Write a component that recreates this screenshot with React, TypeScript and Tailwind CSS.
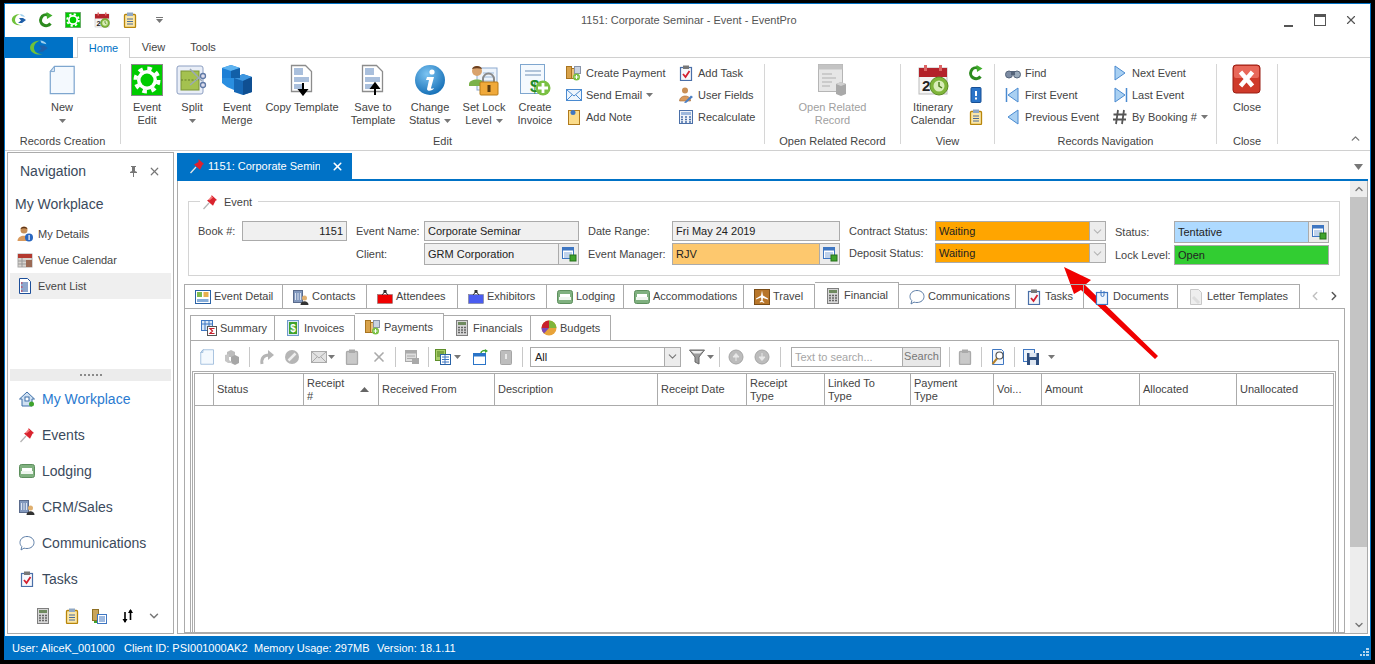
import React from 'react';
import { ChevronDown, ChevronUp, ChevronLeft, ChevronRight, X } from 'lucide-react';

const Svg = ({ s = 16, children }: { s?: number; children: React.ReactNode }) => (
  <svg width={s} height={s} viewBox={`0 0 ${s} ${s}`} className="shrink-0">
    {children}
  </svg>
);

const Caret = () => (
  <svg width="7" height="4" viewBox="0 0 7 4" className="shrink-0">
    <path d="M0 0h7L3.5 4z" fill="#777" />
  </svg>
);

const Logo = ({ s = 16 }: { s?: number }) => (
  <svg width={s} height={s} viewBox="0 0 16 16" className="shrink-0">
    <path d="M9 2C4 2 0 5 1 9c1 3 5 5 10 4-4 0-7-2-7-5 0-3 2-5 5-6z" fill="#6fc13a" />
    <path d="M8 6h4l3 2-4 3H7l3-2.500z" fill="#1f5fa8" />
    <path d="M9 2c2 0 4 1 5 3l-4-1z" fill="#9fd0ee" />
  </svg>
);

const Refresh = ({ s = 16 }: { s?: number }) => (
  <svg width={s} height={s} viewBox="0 0 16 16" className="shrink-0">
    <path d="M12.500 11.500A5.500 5.500 0 1 1 10 3" fill="none" stroke="#2c8a1e" strokeWidth="3" />
    <path d="M8.500 0l6 3.500-5.500 3.500z" fill="#3fae2a" />
  </svg>
);

const GearBox = ({ s = 16 }: { s?: number }) => (
  <svg width={s} height={s} viewBox="0 0 32 32" className="shrink-0">
    <rect x="0.500" y="0.500" width="31" height="31" fill="#00cc00" stroke="#8a8a8a" />
    <circle cx="16" cy="16" r="11.500" fill="none" stroke="#fff" strokeWidth="4" strokeDasharray="4.500 4.530" />
    <circle cx="16" cy="16" r="10" fill="#fff" />
    <circle cx="16" cy="16" r="6.500" fill="#00cc00" />
  </svg>
);

const CalClock = ({ s = 16 }: { s?: number }) => (
  <svg width={s} height={s} viewBox="0 0 32 32" className="shrink-0">
    <rect x="2" y="4" width="28" height="26" fill="#f4f4f4" stroke="#bbb" />
    <rect x="2" y="4" width="28" height="9" fill="#b3222a" />
    <rect x="7" y="1" width="3" height="6" fill="#d66" />
    <rect x="22" y="1" width="3" height="6" fill="#d66" />
    <text x="5" y="27" fontSize="15" fontWeight="700" fill="#222" fontFamily="Liberation Sans, sans-serif">2</text>
    <circle cx="22" cy="22" r="9" fill="#7fb53a" stroke="#5b8c22" />
    <circle cx="22" cy="22" r="5.500" fill="#d9edb8" />
    <path d="M22 18v4l3 2" stroke="#4f7f1c" strokeWidth="1.500" fill="none" />
  </svg>
);

const Clip = ({ gray = false }: { gray?: boolean }) => (
  <Svg>
    <rect x="2.500" y="2.500" width="11" height="13" rx="1" fill={gray ? '#c9c9c9' : '#fbe7a8'} stroke={gray ? '#aaa' : '#b8860b'} strokeWidth="1.300" />
    <rect x="5" y="0.500" width="6" height="3.500" fill={gray ? '#aaa' : '#8fa7c4'} />
    {!gray && <path d="M5 7h6M5 9.500h6M5 12h6" stroke="#4a6b9a" />}
  </Svg>
);

const Pin = ({ s = 16 }: { s?: number }) => (
  <svg width={s} height={s} viewBox="0 0 16 16" className="shrink-0">
    <path d="M1.500 15L7 9" stroke="#b5b5b5" strokeWidth="1.300" />
    <path d="M9.500 1l5.500 5-1.500.7-2.500 5L5 6.500l4.500-2.500z" fill="#d9232e" />
    <path d="M9.500 2l1.500 1.500-3.500 3-1-1z" fill="#f47a7a" />
  </svg>
);

const PinWhite = () => (
  <Svg>
    <path d="M1.500 15L7 9" stroke="#e5e5e5" strokeWidth="1.300" />
    <path d="M9.500 1l5.500 5-1.500.7-2.500 5L5 6.500l4.500-2.500z" fill="#e0202c" />
  </Svg>
);

const DocNew = ({ s = 16 }: { s?: number }) => (
  <svg width={s} height={s} viewBox="0 0 32 32" className="shrink-0">
    <path d="M8 1.500h21v29H3.500V7z" fill="#f4f9fe" stroke="#7ea6cf" strokeWidth="1.300" />
    <path d="M8 1.500V7H3.500z" fill="#d5e5f5" stroke="#7ea6cf" />
  </svg>
);

const Split = () => (
  <Svg s={32}>
    <rect x="1" y="2" width="26" height="28" rx="2" fill="#e9eef7" stroke="#8d9fc2" />
    <rect x="5" y="7" width="18" height="19" fill="#a4c14f" stroke="#7a9436" />
    <path d="M5 16h18" stroke="#667f28" strokeDasharray="2 1.500" />
    <path d="M14 5l12 12M14 21l11-9" stroke="#9aa7b8" strokeWidth="1.500" />
    <circle cx="27" cy="12" r="2.500" fill="#dde" stroke="#5f79a5" strokeWidth="1.300" />
    <circle cx="27" cy="21" r="2.500" fill="#dde" stroke="#5f79a5" strokeWidth="1.300" />
  </Svg>
);

const Merge = () => (
  <Svg s={32}>
    <path d="M1 4l9-3 9 3v10H1z" fill="#1d7fd6" />
    <path d="M1 4l9-3 9 3-9 3z" fill="#5db3f0" />
    <path d="M13 14l9-4 9 3v15l-9 3-9-3z" fill="#1667b5" />
    <path d="M13 14l9-4 9 3-9 4z" fill="#3d96e0" />
    <path d="M22 17l9-4v15l-9 3z" fill="#0f4f92" />
    <path d="M1 14h12v12l-7-3-5-4z" fill="#2a8ee0" />
    <path d="M10 7l9-3v10h-9z" fill="#125fa8" />
  </Svg>
);

const Template = ({ up = false }: { up?: boolean }) => (
  <Svg s={32}>
    <path d="M5.500 1.500h14l6 6v20h-20z" fill="#fff" stroke="#8c8c8c" strokeWidth="1.300" />
    <rect x="8" y="4" width="9" height="7" fill="#a9bfdc" />
    <rect x="8" y="13" width="15" height="5" fill="#a9bfdc" />
    <rect x="8" y="20" width="8" height="5" fill="#a9bfdc" />
    <path d={up ? 'M18 31V21M14.500 24l3.500-4.500 3.500 4.500z' : 'M17 19v10M13.500 26l3.500 4.500 3.500-4.500z'} stroke="#000" strokeWidth="2" fill="#000" />
  </Svg>
);

const Info = () => (
  <Svg s={32}>
    <defs>
      <radialGradient id="ig" cx="0.400" cy="0.300" r="0.800">
        <stop offset="0" stopColor="#7cc4f2" />
        <stop offset="1" stopColor="#0a66b0" />
      </radialGradient>
    </defs>
    <circle cx="16" cy="16" r="15" fill="url(#ig)" />
    <circle cx="18" cy="8" r="2.600" fill="#fff" />
    <path d="M13 13h7l-3 11c0 1 1 1 3 0-1 3-7 4-7 1l2-9h-3z" fill="#fff" />
  </Svg>
);

const LockUser = () => (
  <Svg s={32}>
    <rect x="9" y="4" width="20" height="22" fill="#eef4fb" stroke="#8ba9cf" />
    <path d="M15 9h11M15 13h11M15 17h11" stroke="#9cb8d8" />
    <circle cx="9" cy="7" r="5" fill="#d9a26c" />
    <path d="M4 5c1-4 9-4 10 0-3-1-7-1-10 0z" fill="#6b4020" />
    <path d="M1 20c0-6 16-6 16 0v2H1z" fill="#7bb24a" />
    <path d="M15 19v-4a5.500 5.500 0 0 1 11 0v4" fill="none" stroke="#8a8a8a" strokeWidth="2" />
    <rect x="12" y="18" width="18" height="13" rx="1" fill="#f0a93a" stroke="#b97a16" />
    <rect x="19.500" y="21" width="3" height="7" fill="#5b3b0e" />
  </Svg>
);

const Invoice = () => (
  <Svg s={32}>
    <rect x="1.500" y="0.500" width="24" height="29" fill="#f4f9fe" stroke="#7ea6cf" />
    <path d="M6 7h16M6 11h16" stroke="#6f8fb5" />
    <text x="11" y="28" fontSize="17" fontWeight="700" fill="#1f8a2a" fontFamily="Liberation Sans, sans-serif">$</text>
    <circle cx="24" cy="24" r="7.500" fill="#7ac043" />
    <path d="M24 19v10M19 24h10" stroke="#fff" strokeWidth="2.800" />
  </Svg>
);

const OpenRelated = () => (
  <Svg s={32}>
    <rect x="1.500" y="0.500" width="24" height="27" fill="#e6e6e6" stroke="#b5b5b5" />
    <rect x="1.500" y="0.500" width="24" height="5" fill="#c3c3c3" />
    <path d="M5 10h10M5 14h14M5 18h10M5 22h8" stroke="#b0b0b0" />
    <path d="M19 20l5-2 5 2v10l-5 2-5-2z" fill="#a9a9a9" />
    <path d="M19 20l5 2 5-2-5-2z" fill="#cfcfcf" />
  </Svg>
);

const CloseBig = () => (
  <Svg s={32}>
    <rect x="2" y="1" width="27" height="28" rx="3" fill="#cf3a2a" stroke="#9a1f14" />
    <rect x="3" y="2" width="25" height="12" rx="2" fill="#e8685a" />
    <path d="M9.500 8l12 14M21.500 8l-12 14" stroke="#fff" strokeWidth="4.500" />
  </Svg>
);

const Coins = () => (
  <Svg>
    <rect x="0.500" y="1.500" width="5" height="12" fill="#d8a24a" stroke="#a87420" />
    <rect x="5.500" y="3.500" width="4" height="10" fill="#eac27c" stroke="#a87420" />
    <rect x="8.500" y="1.500" width="6" height="7" fill="#c9d3e2" stroke="#8894a8" />
    <circle cx="10.500" cy="12" r="3.500" fill="#7ac043" />
    <path d="M10.500 10v4M8.500 12h4" stroke="#fff" />
  </Svg>
);

const Mail = ({ gray = false }: { gray?: boolean }) => (
  <Svg>
    <rect x="0.500" y="2.500" width="15" height="11" fill={gray ? '#e2e2e2' : '#eef5fc'} stroke={gray ? '#aaa' : '#4a8ad0'} />
    <path d="M1 3l7 6 7-6M1 13l5-5M15 13l-5-5" fill="none" stroke={gray ? '#aaa' : '#4a8ad0'} />
  </Svg>
);

const Note = () => (
  <Svg>
    <rect x="2.500" y="1.500" width="11" height="14" fill="#fbdc8a" stroke="#b07a1c" />
    <circle cx="7" cy="3.500" r="2.500" fill="#3f77c2" />
  </Svg>
);

const TaskClip = () => (
  <Svg>
    <rect x="2.500" y="2.500" width="11" height="13" fill="#f6f8fc" stroke="#4a6fa8" strokeWidth="1.200" />
    <rect x="5" y="0.500" width="6" height="3.500" fill="#777" />
    <path d="M5 9l2.500 3L11.500 6" fill="none" stroke="#d32030" strokeWidth="1.800" />
  </Svg>
);

const UserPen = () => (
  <Svg>
    <circle cx="7" cy="3.500" r="3" fill="#c98f55" />
    <path d="M1.500 14c0-6 10-7 11-1v1z" fill="#d99a5d" stroke="#a66a30" strokeWidth="0.600" />
    <path d="M6 15.500l7-7 2 1.500-7 6z" fill="#4a7fc4" />
  </Svg>
);

const Calc = ({ color = '#4a6fa8' }: { color?: string }) => (
  <Svg>
    <rect x="1.500" y="1.500" width="13" height="13" fill="#eef2f8" stroke={color} />
    <rect x="3" y="3" width="10" height="3" fill="#9db7dc" />
    <path d="M3 8h2M7 8h2M11 8h2M3 10.500h2M7 10.500h2M11 10.500h2M3 13h2M7 13h2M11 13h2" stroke={color} strokeWidth="1.300" />
  </Svg>
);

const CalcGray = () => (
  <Svg>
    <rect x="2.500" y="0.500" width="11" height="15" fill="#d6d6d6" stroke="#7f7f7f" />
    <rect x="4" y="2" width="8" height="3" fill="#6f8a5f" />
    <path d="M4 7.500h2M7 7.500h2M10 7.500h2M4 10h2M7 10h2M10 10h2M4 12.500h2M7 12.500h2M10 12.500h2" stroke="#666" strokeWidth="1.300" />
  </Svg>
);

const Binoculars = () => (
  <Svg>
    <circle cx="4" cy="9.500" r="3.500" fill="#7d8ca3" stroke="#55647a" />
    <circle cx="12" cy="9.500" r="3.500" fill="#9ab" stroke="#55647a" />
    <rect x="6" y="6" width="4" height="4" fill="#55647a" />
  </Svg>
);

const Tri = ({ dir, bar = false }: { dir: 'l' | 'r'; bar?: boolean }) => (
  <Svg>
    <path d={dir === 'r' ? 'M3 1l10 7-10 7z' : 'M13 1L3 8l10 7z'} fill="#a9d0f2" stroke="#4a8ad0" />
    {bar && <path d={dir === 'r' ? 'M14.500 1v14' : 'M1.500 1v14'} stroke="#4a8ad0" strokeWidth="1.500" />}
  </Svg>
);

const Hash = () => (
  <Svg>
    <path d="M6 1L4 15M12 1l-2 14M1.500 5.500h13M1 10.500h13" stroke="#555" strokeWidth="1.800" />
  </Svg>
);

const InfoDoc = () => (
  <Svg>
    <rect x="3" y="0.500" width="10" height="15" rx="1" fill="#2a74c8" stroke="#174f94" />
    <rect x="7" y="4" width="2" height="5" fill="#fff" />
    <rect x="7" y="10.500" width="2" height="2" fill="#fff" />
  </Svg>
);

const Lookup = () => (
  <Svg>
    <rect x="1.500" y="1.500" width="11" height="11" fill="#fff" stroke="#3f77c2" />
    <rect x="1.500" y="1.500" width="11" height="3" fill="#3f77c2" />
    <path d="M3 7h8M3 9h8M3 11h6" stroke="#7fa5d8" />
    <rect x="9" y="9" width="6" height="6" fill="#3fa32c" stroke="#26701a" />
  </Svg>
);

const UserInfo = () => (
  <Svg>
    <circle cx="7" cy="4" r="3.500" fill="#c98f55" />
    <path d="M3.500 3c1-3 6-3 7 0-2-1-5-1-7 0z" fill="#5b3418" />
    <path d="M0.500 15c0-7 13-7 13 0z" fill="#d99a5d" />
    <circle cx="12" cy="11.500" r="4" fill="#2a67c0" />
    <rect x="11.500" y="9" width="1.200" height="5" fill="#fff" />
  </Svg>
);

const VenueCal = () => (
  <Svg>
    <rect x="1" y="2" width="14" height="13" fill="#d8d4cf" stroke="#aaa" />
    <rect x="1" y="2" width="14" height="4" fill="#b3392f" />
    <rect x="9" y="8" width="6" height="7" fill="#9a6a55" />
    <path d="M1 9h8M1 12h8M5 6v9" stroke="#999" />
  </Svg>
);

const ListDoc = () => (
  <Svg>
    <path d="M2.500 0.500h8l3 3v12h-11z" fill="#fff" stroke="#1d4f9a" />
    <path d="M4 5h7M4 7h7M4 9h7M4 11h7M4 13h7" stroke="#1d4f9a" />
    <path d="M4 5h1.500M4 9h1.500M4 13h1.500" stroke="#d32030" />
  </Svg>
);

const House = () => (
  <Svg>
    <path d="M8 1L0.500 8h2.500v7h10V8h2.500z" fill="#cfe0f2" stroke="#3d6fa8" />
    <rect x="6" y="6" width="4" height="4" fill="#fff" stroke="#3d6fa8" />
    <circle cx="12.500" cy="13" r="2.500" fill="#3fa32c" />
  </Svg>
);

const Bed = () => (
  <Svg>
    <rect x="0.500" y="1.500" width="15" height="13" rx="2" fill="#7fb07f" stroke="#5d8f5d" />
    <rect x="3" y="5" width="10" height="3" fill="#fff" />
    <rect x="2" y="8" width="12" height="3" fill="#eef5ee" />
  </Svg>
);

const Building = () => (
  <Svg>
    <rect x="0.500" y="1.500" width="9" height="12" fill="#8298bd" stroke="#5a6b8c" />
    <path d="M2.500 4v7M5 4v7M7.500 4v7" stroke="#dbe4f2" />
    <circle cx="11.500" cy="9" r="2.500" fill="#e0b070" />
    <path d="M7.500 16c0-5 8-5 8 0z" fill="#333" />
  </Svg>
);

const Bubble = () => (
  <Svg>
    <path d="M8 1.500c4 0 7 2.500 7 6s-3 6-7 6c-1 0-2 0-3-.4L2 15l.8-3.500C1.500 10.500 1 9 1 7.500c0-3.500 3-6 7-6z" fill="#fff" stroke="#5f7fa8" />
  </Svg>
);

const SheetPage = () => (
  <Svg>
    <rect x="0.500" y="1.500" width="6" height="11" fill="#c9a45a" stroke="#8f7024" />
    <rect x="5.500" y="6.500" width="9" height="9" fill="#fff" stroke="#3f77c2" />
    <path d="M7 9h6M7 11h6M7 13h6" stroke="#3f77c2" />
    <path d="M2 14h3" stroke="#3fa32c" strokeWidth="2" />
  </Svg>
);

const Sort = () => (
  <Svg>
    <path d="M5 4v10M10.500 12V2" stroke="#000" strokeWidth="1.600" />
    <path d="M2.500 11l2.500 4 2.500-4zM8 5l2.500-4L13 5z" fill="#000" />
  </Svg>
);

const EventDetail = () => (
  <Svg>
    <rect x="0.500" y="1.500" width="15" height="13" fill="#fff" stroke="#2a62a5" />
    <rect x="2" y="3" width="5" height="5" fill="#7dbb4e" />
    <rect x="8.500" y="3" width="5" height="5" fill="#e8b04d" />
    <rect x="2" y="10" width="11.500" height="3" fill="#87aeda" />
  </Svg>
);

const Badge = ({ fill }: { fill: string }) => (
  <Svg>
    <rect x="0.500" y="5.500" width="15" height="9" fill={fill} stroke="#777" strokeWidth="0.500" />
    <path d="M5 6l3-3.500L11 6" fill="none" stroke="#333" />
    <rect x="6.500" y="1" width="3" height="3" fill="#333" />
  </Svg>
);

const Plane = () => (
  <Svg>
    <rect x="0.500" y="0.500" width="15" height="15" fill="#b8762a" stroke="#7a4d18" />
    <path d="M8 1.500l1 5 5 3v1l-5-1.500-.4 3 1.600 1v1L8 13l-2.200.500v-1l1.600-1-.4-3L2 10.500v-1l5-3z" fill="#fff" />
  </Svg>
);

const DocClip = () => (
  <Svg>
    <rect x="2.500" y="3.500" width="11" height="12" fill="#f0f6fd" stroke="#3f77c2" strokeWidth="1.200" />
    <path d="M7 1v5a1.500 1.500 0 0 0 3 0V2" fill="none" stroke="#3f77c2" />
  </Svg>
);

const Letter = () => (
  <Svg>
    <path d="M2.500 0.500h8l3 3v12h-11z" fill="#eee" stroke="#c8c8c8" />
    <path d="M5 8l6 6" stroke="#ddd" strokeWidth="3" />
  </Svg>
);

const Summary = () => (
  <Svg>
    <rect x="0.500" y="0.500" width="11" height="10" fill="#dbe8f7" stroke="#3f77c2" />
    <path d="M0.500 4h11M4 0.500v10M8 0.500v10" stroke="#3f77c2" />
    <rect x="6.500" y="6.500" width="9" height="9" fill="#fff" stroke="#555" />
    <path d="M13.500 8.500H9L11.500 11 9 13.500h4.500" fill="none" stroke="#c8202c" strokeWidth="1.200" />
  </Svg>
);

const InvoiceTab = () => (
  <Svg>
    <rect x="2.500" y="0.500" width="11" height="15" fill="#d9e8f7" stroke="#6f9bcb" />
    <rect x="4" y="2" width="8" height="12" fill="#3fa32c" />
    <text x="5.300" y="12" fontSize="10" fontWeight="700" fill="#fff" fontFamily="Liberation Sans, sans-serif">$</text>
  </Svg>
);

const Pie = () => (
  <Svg>
    <circle cx="8" cy="8" r="7.500" fill="#e8a33a" />
    <path d="M8 8V.5A7.500 7.500 0 0 1 15.500 8z" fill="#7fb53a" />
    <path d="M8 8H.5A7.500 7.500 0 0 1 8 .5z" fill="#c8202c" />
    <path d="M8 8l-5 5.500A7.500 7.500 0 0 1 .5 8z" fill="#7a48b5" />
  </Svg>
);

const Cube3 = () => (
  <Svg>
    <path d="M3 3l4-2 4 2v5H3z" fill="#bcbcbc" />
    <path d="M7 8l4-2 4 2v6l-4 2-4-2z" fill="#a6a6a6" />
    <path d="M1 6l4-1v6l3 2v1H4l-3-2z" fill="#c6c6c6" />
  </Svg>
);

const Redo = () => (
  <Svg>
    <path d="M3 15c-1-6 2-9 7-9" fill="none" stroke="#b5b5b5" strokeWidth="3" />
    <path d="M9 1l6 5-6 5z" fill="#b5b5b5" />
  </Svg>
);

const NoSign = () => (
  <Svg>
    <circle cx="8" cy="8" r="7" fill="#b5b5b5" />
    <path d="M4.500 11.500l7-7" stroke="#eee" strokeWidth="2.500" />
  </Svg>
);

const Report = () => (
  <Svg>
    <rect x="1.500" y="1.500" width="11" height="11" fill="#ddd" stroke="#aaa" />
    <rect x="1.500" y="1.500" width="11" height="3" fill="#aaa" />
    <path d="M3 7h8M3 9.500h8" stroke="#aaa" />
    <rect x="8" y="9" width="7" height="6" fill="#a9a9a9" />
  </Svg>
);

const Columns = () => (
  <Svg>
    <rect x="0.500" y="0.500" width="10" height="11" fill="#a9cf6a" stroke="#5f8f2a" />
    <path d="M2 3h7M2 5h7M2 7h7" stroke="#4f7f1c" />
    <rect x="5.500" y="5.500" width="10" height="10" fill="#fff" stroke="#2a62a5" />
    <path d="M7 8h7M7 10.500h7M7 13h7M10 6v9" stroke="#3f77c2" />
  </Svg>
);

const WinArrow = () => (
  <Svg>
    <rect x="0.500" y="4.500" width="12" height="11" fill="#fff" stroke="#2a74c8" />
    <rect x="0.500" y="4.500" width="12" height="3" fill="#2a74c8" />
    <path d="M8 4c0-2 3-3 5-2" fill="none" stroke="#3fa32c" strokeWidth="1.500" />
    <path d="M12 0l3 2-3 2z" fill="#3fa32c" />
  </Svg>
);

const GrayDoc = () => (
  <Svg>
    <rect x="2.500" y="1.500" width="11" height="14" rx="1" fill="#bdbdbd" stroke="#a5a5a5" />
    <rect x="7" y="5" width="2" height="5" fill="#e8e8e8" />
  </Svg>
);

const Funnel = () => (
  <Svg>
    <path d="M0.500 1h15L10 8v7l-4-2V8z" fill="#9a9a9a" stroke="#666" />
    <path d="M2 2h12l-3 2.500H5z" fill="#eee" />
  </Svg>
);

const UpDown = ({ up }: { up: boolean }) => (
  <Svg>
    <circle cx="8" cy="8" r="7" fill="#bcbcbc" stroke="#a5a5a5" />
    <path d={up ? 'M8 12V6M5 8l3-3.500L11 8z' : 'M8 4v6M5 8l3 3.500L11 8z'} stroke="#e8e8e8" fill="#e8e8e8" />
  </Svg>
);

const FindDoc = () => (
  <Svg>
    <path d="M2.500 0.500h9l2 2v13h-11z" fill="#f3f7fc" stroke="#3f77c2" />
    <circle cx="9.500" cy="6.500" r="3.500" fill="#fff" stroke="#555" strokeWidth="1.200" />
    <path d="M7 9.500L2.500 15" stroke="#b5822a" strokeWidth="2" />
  </Svg>
);

const Save = () => (
  <Svg>
    <rect x="0.500" y="0.500" width="11" height="12" fill="#eef4fb" stroke="#3f77c2" />
    <rect x="4" y="4" width="12" height="12" fill="#2f4f7f" />
    <rect x="6.500" y="4" width="7" height="4" fill="#dfe7f2" />
    <rect x="7" y="11" width="6" height="5" fill="#dfe7f2" />
  </Svg>
);

const NavPin = () => (
  <svg width="9" height="11" viewBox="0 0 9 11" className="shrink-0">
    <path d="M2 0h5v1H6v4l2 1v1H1V6l2-1V1H2zM4 7h1v4H4z" fill="#777" />
  </svg>
);

const BigButton = ({ w, icon, label, caret, muted }: { w: string; icon: React.ReactNode; label: React.ReactNode; caret?: boolean; muted?: boolean }) => (
  <div className={`${w} flex flex-col items-center shrink-0 leading-[13px] text-center ${muted ? 'text-[#a0a0a0]' : ''}`}>
    <div className="h-8 flex items-center justify-center mb-[5px]">{icon}</div>
    {label}
    {caret === true && <div className="h-[13px] flex items-center justify-center"><Caret /></div>}
  </div>
);

const SmallItem = ({ icon, label, caret }: { icon: React.ReactNode; label: string; caret?: boolean }) => (
  <div className="h-[22px] flex items-center gap-1 whitespace-nowrap">
    {icon}
    <span>{label}</span>
    {caret === true && <Caret />}
  </div>
);

const RibbonGroup = ({ w, label, children }: { w: string; label: string; children: React.ReactNode }) => (
  <div className={`${w} shrink-0 h-20 border-r border-[#d6d6d6] flex flex-col`}>
    <div className="h-[70px] flex shrink-0">{children}</div>
    <div className="text-center leading-[13px] whitespace-nowrap mt-px shrink-0">{label}</div>
  </div>
);

const Field = ({ w, h, bg, right, lookup, children }: { w: string; h: string; bg: string; right?: boolean; lookup?: boolean; children: React.ReactNode }) => (
  <div className={`${w} ${h} ${bg} border border-[#ababab] flex items-center shrink-0`}>
    <div className={`flex-1 px-[3px] pt-px text-[#222] truncate ${right ? 'text-right' : ''}`}>{children}</div>
    {lookup === true && (
      <div className="w-[20px] h-full bg-[#ececec] border-l border-[#ababab] flex items-center justify-center"><Lookup /></div>
    )}
  </div>
);

const Combo = ({ children }: { children: React.ReactNode }) => (
  <div className="w-[171px] h-5 bg-[#ffa500] border border-[#ababab] flex items-center shrink-0">
    <div className="flex-1 px-[3px] pt-px text-[#222]">{children}</div>
    <div className="w-[16px] h-full bg-[#ececec] border-l border-[#ababab] flex items-center justify-center">
      <ChevronDown size={13} color="#b5b5b5" strokeWidth={2} />
    </div>
  </div>
);

const Label = ({ w, h, children }: { w: string; h: string; children: React.ReactNode }) => (
  <div className={`${w} ${h} pt-px flex items-center whitespace-nowrap shrink-0`}>{children}</div>
);

const mainTabs = [
  { w: 'w-[99px]', icon: <EventDetail />, label: 'Event Detail' },
  { w: 'w-[84px]', icon: <Building />, label: 'Contacts' },
  { w: 'w-[91px]', icon: <Badge fill="#f00000" />, label: 'Attendees' },
  { w: 'w-[89px]', icon: <Badge fill="#4a5cf0" />, label: 'Exhibitors' },
  { w: 'w-[77px]', icon: <Bed />, label: 'Lodging' },
  { w: 'w-[120px]', icon: <Bed />, label: 'Accommodations' },
  { w: 'w-[71px]', icon: <Plane />, label: 'Travel' },
  { w: 'w-[84px]', icon: <CalcGray />, label: 'Financial', active: true },
  { w: 'w-[117px]', icon: <Bubble />, label: 'Communications' },
  { w: 'w-[68px]', icon: <TaskClip />, label: 'Tasks' },
  { w: 'w-[94px]', icon: <DocClip />, label: 'Documents' },
  { w: 'w-[122px]', icon: <Letter />, label: 'Letter Templates' },
];

const subTabs = [
  { w: 'w-[85px]', icon: <Summary />, label: 'Summary' },
  { w: 'w-[80px]', icon: <InvoiceTab />, label: 'Invoices' },
  { w: 'w-[89px]', icon: <Coins />, label: 'Payments', active: true },
  { w: 'w-[87px]', icon: <CalcGray />, label: 'Financials' },
  { w: 'w-[80px]', icon: <Pie />, label: 'Budgets' },
];

const gridCols = [
  { w: 'w-[19px]', label: '' },
  { w: 'w-[90px]', label: 'Status' },
  { w: 'w-[75px]', label: 'Receipt\n#', sort: true },
  { w: 'w-[116px]', label: 'Received From' },
  { w: 'w-[163px]', label: 'Description' },
  { w: 'w-[89px]', label: 'Receipt Date' },
  { w: 'w-[78px]', label: 'Receipt\nType' },
  { w: 'w-[86px]', label: 'Linked To\nType' },
  { w: 'w-[83px]', label: 'Payment\nType' },
  { w: 'w-[48px]', label: 'Voi...' },
  { w: 'w-[98px]', label: 'Amount' },
  { w: 'w-[97px]', label: 'Allocated' },
  { w: 'flex-1', label: 'Unallocated' },
];

const navTop = [
  { icon: <UserInfo />, label: 'My Details' },
  { icon: <VenueCal />, label: 'Venue Calendar' },
  { icon: <ListDoc />, label: 'Event List', active: true },
];

const navBottom = [
  { icon: <House />, label: 'My Workplace', active: true },
  { icon: <Pin />, label: 'Events' },
  { icon: <Bed />, label: 'Lodging' },
  { icon: <Building />, label: 'CRM/Sales' },
  { icon: <Bubble />, label: 'Communications' },
  { icon: <TaskClip />, label: 'Tasks' },
];

const Sep = ({ ml }: { ml: string }) => <div className={`w-px h-5 bg-[#c8c8c8] shrink-0 ${ml}`} />;

export default function App() {
  return (
    <div className="w-[1375px] h-[664px] bg-black pt-[3px] pl-1 relative overflow-hidden font-['Liberation_Sans',sans-serif] text-[11px] text-[#444]">
      <div className="w-[1367px] h-[657px] bg-white border border-[#0072c6] border-b-0 flex flex-col">
        {/* title bar */}
        <div className="h-8 flex items-center shrink-0">
          <div className="ml-[6px]"><Logo /></div>
          <div className="ml-[11px]"><Refresh /></div>
          <div className="ml-[11px]"><GearBox /></div>
          <div className="ml-[13px]"><CalClock /></div>
          <div className="ml-[12px]"><Clip /></div>
          <div className="ml-[18px] flex flex-col items-center gap-px">
            <div className="w-[7px] h-px bg-[#777]" />
            <Caret />
          </div>
          <div className="ml-[418px] pt-px whitespace-nowrap text-[#555]">1151: Corporate Seminar - Event - EventPro</div>
          <div className="ml-auto flex items-center mr-[12px] gap-[18px] text-[#555]">
            <div className="w-[12px] h-[14px] flex items-end"><div className="w-[9px] h-[2px] bg-[#555]" /></div>
            <div className="w-[12px] h-[12px] border border-t-[3px] border-[#555]" />
            <X size={14} strokeWidth={2} />
          </div>
        </div>

        {/* ribbon tabs */}
        <div className="h-[22px] flex items-stretch border-b border-[#d0d0d0] shrink-0 pt-px">
          <div className="w-[68px] bg-[#0072c6] flex items-center justify-center -mb-px"><Logo s={20} /></div>
          <div className="w-[53px] ml-1 bg-white border border-[#d0d0d0] border-b-0 -mb-px text-[#0072c6] flex items-center justify-center">Home</div>
          <div className="ml-[12px] w-[23px] flex items-center justify-center">View</div>
          <div className="ml-[25px] w-[26px] flex items-center justify-center">Tools</div>
        </div>

        {/* ribbon */}
        <div className="h-[93px] border-b border-[#d0d0d0] shrink-0 flex pt-[6px] relative">
          <RibbonGroup w="w-[116px]" label="Records Creation">
            <BigButton w="w-[114px]" icon={<DocNew s={30} />} label="New" caret />
          </RibbonGroup>
          <RibbonGroup w="w-[644px]" label="Edit">
            <div className="w-1 shrink-0" />
            <BigButton w="w-[44px]" icon={<GearBox s={32} />} label={<>Event<br />Edit</>} />
            <BigButton w="w-[46px]" icon={<Split />} label="Split" caret />
            <BigButton w="w-[44px]" icon={<Merge />} label={<>Event<br />Merge</>} />
            <BigButton w="w-[86px]" icon={<Template />} label="Copy Template" />
            <BigButton w="w-[56px]" icon={<Template up />} label={<>Save to<br />Template</>} />
            <BigButton w="w-[58px]" icon={<Info />} label={<>Change<br /><span className="inline-flex items-center gap-1">Status <Caret /></span></>} />
            <BigButton w="w-[50px]" icon={<LockUser />} label={<>Set Lock<br /><span className="inline-flex items-center gap-1">Level <Caret /></span></>} />
            <BigButton w="w-[52px]" icon={<Invoice />} label={<>Create<br />Invoice</>} />
            <div className="w-[113px] shrink-0 pl-[5px] -mt-0.5">
              <SmallItem icon={<Coins />} label="Create Payment" />
              <SmallItem icon={<Mail />} label="Send Email" caret />
              <SmallItem icon={<Note />} label="Add Note" />
            </div>
            <div className="pl-1 -mt-0.5">
              <SmallItem icon={<TaskClip />} label="Add Task" />
              <SmallItem icon={<UserPen />} label="User Fields" />
              <SmallItem icon={<Calc />} label="Recalculate" />
            </div>
          </RibbonGroup>
          <RibbonGroup w="w-[136px]" label="Open Related Record">
            <BigButton w="w-[135px]" icon={<OpenRelated />} label={<>Open Related<br />Record</>} muted />
          </RibbonGroup>
          <RibbonGroup w="w-[94px]" label="View">
            <BigButton w="w-[64px]" icon={<CalClock s={32} />} label={<>Itinerary<br />Calendar</>} />
            <div className="-mt-0.5 pl-[3px]">
              <SmallItem icon={<Refresh />} label="" />
              <SmallItem icon={<InfoDoc />} label="" />
              <SmallItem icon={<Clip />} label="" />
            </div>
          </RibbonGroup>
          <RibbonGroup w="w-[222px]" label="Records Navigation">
            <div className="w-[108px] shrink-0 pl-[10px] -mt-0.5">
              <SmallItem icon={<Binoculars />} label="Find" />
              <SmallItem icon={<Tri dir="l" bar />} label="First Event" />
              <SmallItem icon={<Tri dir="l" />} label="Previous Event" />
            </div>
            <div className="pl-[9px] -mt-0.5">
              <SmallItem icon={<Tri dir="r" />} label="Next Event" />
              <SmallItem icon={<Tri dir="r" bar />} label="Last Event" />
              <SmallItem icon={<Hash />} label="By Booking #" caret />
            </div>
          </RibbonGroup>
          <RibbonGroup w="w-[61px]" label="Close">
            <BigButton w="w-[60px]" icon={<CloseBig />} label="Close" />
          </RibbonGroup>
          <div className="ml-auto self-end mb-[5px] mr-[8px] text-[#777]"><ChevronUp size={13} strokeWidth={2.500} /></div>
        </div>

        {/* main area */}
        <div className="flex-1 min-h-0 flex">
          <div className="w-[167px] ml-0.5 mt-px mb-0.5 border border-[#ababab] flex flex-col shrink-0">
            <div className="flex-1 min-h-0">
              <div className="h-9 flex items-center pl-3 pr-3 pt-px text-[14px] text-[#3b4a5c]">
                <span>Navigation</span>
                <span className="ml-auto mr-[10px]"><NavPin /></span>
                <X size={13} color="#777" strokeWidth={2.200} />
              </div>
              <div className="h-[30px] flex items-center pl-[7px] pt-px text-[14px] text-[#3b4a5c]">My Workplace</div>
              <div className="mt-0.5">
                {navTop.map((n) => (
                  <div key={n.label} className={`h-[26px] mx-0.5 pl-[7px] flex items-center gap-[5px] ${n.active ? 'bg-[#efefef]' : ''}`}>
                    {n.icon}
                    <span>{n.label}</span>
                  </div>
                ))}
              </div>
            </div>
            <div className="h-[12px] bg-[#ececec] mx-0.5 flex items-center justify-center gap-px shrink-0">
              <div className="w-[22px] border-t-2 border-dotted border-[#8a8a8a]" />
            </div>
            {navBottom.map((n) => (
              <div key={n.label} className={`h-9 pl-[11px] flex items-center gap-[7px] text-[14px] shrink-0 ${n.active ? 'text-[#2a7ad0]' : 'text-[#3b4a5c]'}`}>
                {n.icon}
                <span>{n.label}</span>
              </div>
            ))}
            <div className="h-9 flex items-center shrink-0 pt-0.5">
              <div className="ml-[27px]"><CalcGray /></div>
              <div className="ml-[13px]"><Clip /></div>
              <div className="ml-[12px]"><SheetPage /></div>
              <div className="ml-[12px]"><Sort /></div>
              <div className="ml-[11px]"><ChevronDown size={14} color="#777" strokeWidth={2.500} /></div>
            </div>
          </div>

          <div className="flex-1 min-w-0 ml-[3px] mr-0.5 mb-0.5 flex flex-col">
            <div className="h-7 flex items-end shrink-0 relative">
              <div className="w-[175px] h-[26px] bg-[#0072c6] text-white flex items-center pl-3">
                <PinWhite />
                <span className="ml-[3px] w-[112px] overflow-hidden whitespace-nowrap">1151: Corporate Seminar</span>
                <X size={13} strokeWidth={2.800} className="ml-[11px]" />
              </div>
              <div className="ml-auto self-center mr-[5px] mt-[3px]">
                <svg width="9" height="6" viewBox="0 0 9 6"><path d="M0 0h9L4.500 6z" fill="#777" /></svg>
              </div>
            </div>
            <div className="h-0.5 bg-[#0072c6] shrink-0" />
            <div className="flex-1 min-h-0 border border-t-0 border-[#ababab] flex">
              <div className="flex-1 min-w-0 flex flex-col">
                {/* event header */}
                <div className="ml-[10px] mt-5 w-[1152px] h-[75px] border border-[#d4d4d4] relative flex pt-[19px] pl-[9px] shrink-0">
                  <div className="absolute -top-[9px] left-[11px] bg-white flex items-center gap-[6px] pl-[2px] pr-[6px] h-[18px]">
                    <Pin />
                    <span>Event</span>
                  </div>
                  <div className="flex">
                    <Label w="w-[44px]" h="h-5">Book #:</Label>
                    <Field w="w-[105px]" h="h-5" bg="bg-[#f0f0f0]" right>1151</Field>
                  </div>
                  <div className="ml-[9px] flex flex-col gap-0.5">
                    <div className="flex">
                      <Label w="w-[68px]" h="h-5">Event Name:</Label>
                      <Field w="w-[155px]" h="h-5" bg="bg-[#f0f0f0]">Corporate Seminar</Field>
                    </div>
                    <div className="flex">
                      <Label w="w-[68px]" h="h-[22px]">Client:</Label>
                      <Field w="w-[155px]" h="h-[22px]" bg="bg-[#f0f0f0]" lookup>GRM Corporation</Field>
                    </div>
                  </div>
                  <div className="ml-[9px] flex flex-col gap-0.5">
                    <div className="flex">
                      <Label w="w-[84px]" h="h-5">Date Range:</Label>
                      <Field w="w-[168px]" h="h-5" bg="bg-[#f0f0f0]">Fri May 24 2019</Field>
                    </div>
                    <div className="flex">
                      <Label w="w-[84px]" h="h-[22px]">Event Manager:</Label>
                      <Field w="w-[168px]" h="h-[22px]" bg="bg-[#fdc86e]" lookup>RJV</Field>
                    </div>
                  </div>
                  <div className="ml-[9px] flex flex-col gap-0.5">
                    <div className="flex">
                      <Label w="w-[86px]" h="h-5">Contract Status:</Label>
                      <Combo>Waiting</Combo>
                    </div>
                    <div className="flex">
                      <Label w="w-[86px]" h="h-5">Deposit Status:</Label>
                      <Combo>Waiting</Combo>
                    </div>
                  </div>
                  <div className="ml-[9px] flex flex-col gap-0.5">
                    <div className="flex">
                      <Label w="w-[59px]" h="h-[22px]">Status:</Label>
                      <Field w="w-[155px]" h="h-[22px]" bg="bg-[#aedaff]" lookup>Tentative</Field>
                    </div>
                    <div className="flex">
                      <Label w="w-[59px]" h="h-5">Lock Level:</Label>
                      <Field w="w-[155px]" h="h-5" bg="bg-[#32cd32]">Open</Field>
                    </div>
                  </div>
                </div>

                {/* event tabs */}
                <div className="ml-[6px] mt-[6px] h-[26px] flex items-end shrink-0 w-[1161px] relative z-10">
                  {mainTabs.map((t) => (
                    <div key={t.label} className={`${t.w} shrink-0 border border-[#ababab] border-l-0 first:border-l pl-[10px] flex items-center gap-[3px] whitespace-nowrap ${t.active ? 'h-[26px] bg-white border-b-0' : 'h-6 border-b-0'}`}>
                      {t.icon}
                      <span>{t.label}</span>
                    </div>
                  ))}
                  <div className="ml-[8px] flex items-center h-6 gap-[5px]">
                    <ChevronLeft size={14} color="#c0c0c0" strokeWidth={2.500} />
                    <ChevronRight size={14} color="#555" strokeWidth={2.500} />
                  </div>
                </div>
                <div className="ml-[6px] w-[1161px] flex-1 min-h-0 border border-[#ababab] px-[5px] flex flex-col">
                  {/* sub tabs */}
                  <div className="h-[31px] flex items-end shrink-0 relative z-10">
                    {subTabs.map((t) => (
                      <div key={t.label} className={`${t.w} shrink-0 border border-[#ababab] border-l-0 first:border-l pl-[10px] flex items-center gap-[3px] whitespace-nowrap ${t.active ? 'h-[27px] bg-white border-b-0' : 'h-[25px] border-b-0'}`}>
                        {t.icon}
                        <span>{t.label}</span>
                      </div>
                    ))}
                  </div>
                  <div className="flex-1 min-h-0 border border-[#ababab] border-b-0 flex flex-col">
                    {/* grid toolbar */}
                    <div className="h-[30px] pt-px flex items-center shrink-0">
                      <div className="ml-[8px]"><DocNew s={16} /></div>
                      <div className="ml-[9px]"><Cube3 /></div>
                      <Sep ml="ml-[9px]" />
                      <div className="ml-[9px]"><Redo /></div>
                      <div className="ml-[9px]"><NoSign /></div>
                      <div className="ml-[11px]"><Mail gray /></div>
                      <div className="ml-[1px]"><Caret /></div>
                      <div className="ml-[9px]"><Clip gray /></div>
                      <div className="ml-[11px]"><X size={16} color="#aaa" strokeWidth={2.500} /></div>
                      <Sep ml="ml-[8px]" />
                      <div className="ml-[8px]"><Report /></div>
                      <Sep ml="ml-[8px]" />
                      <div className="ml-[6px]"><Columns /></div>
                      <div className="ml-[3px]"><Caret /></div>
                      <div className="ml-[12px]"><WinArrow /></div>
                      <div className="ml-[9px]"><GrayDoc /></div>
                      <Sep ml="ml-[8px]" />
                      <div className="ml-[7px] w-[151px] h-5 border border-[#ababab] flex items-center shrink-0">
                        <span className="flex-1 px-1 pt-px text-[#222]">All</span>
                        <div className="w-[16px] h-full bg-[#ececec] border-l border-[#ababab] flex items-center justify-center"><ChevronDown size={13} color="#777" strokeWidth={2} /></div>
                      </div>
                      <div className="ml-[8px]"><Funnel /></div>
                      <div className="ml-[2px]"><Caret /></div>
                      <Sep ml="ml-[5px]" />
                      <div className="ml-[8px]"><UpDown up /></div>
                      <div className="ml-[10px]"><UpDown up={false} /></div>
                      <Sep ml="ml-[10px]" />
                      <div className="ml-[10px] w-[150px] h-5 border border-[#ababab] flex items-center shrink-0">
                        <span className="flex-1 pl-[3px] pt-px text-[#a5a5a5] whitespace-nowrap">Text to search...</span>
                        <div className="w-[38px] h-full bg-[#e8e8e8] border-l border-[#ababab] flex items-center justify-center text-[#777]">Search</div>
                      </div>
                      <Sep ml="ml-[8px]" />
                      <div className="ml-[7px]"><Clip gray /></div>
                      <Sep ml="ml-[8px]" />
                      <div className="ml-[8px]"><FindDoc /></div>
                      <Sep ml="ml-[8px]" />
                      <div className="ml-[8px]"><Save /></div>
                      <div className="ml-[9px]"><Caret /></div>
                    </div>
                    {/* grid */}
                    <div className="flex-1 min-h-0 ml-px mr-0.5 border border-[#ababab] border-b-0 p-px pb-0 flex flex-col">
                      <div className="flex-1 min-h-0 border border-[#ababab] border-b-0 flex flex-col">
                        <div className="h-[32px] flex border-b border-[#ababab] shrink-0">
                          {gridCols.map((c, i) => (
                            <div key={i} className={`${c.w} ${c.w === 'flex-1' ? '' : 'shrink-0 border-r border-[#ababab]'} px-[3px] flex items-center leading-[13px]`}>
                              <span className="flex-1 whitespace-pre-line">{c.label}</span>
                              {c.sort === true && (
                                <svg width="9" height="5" viewBox="0 0 9 5" className="mr-[6px] shrink-0"><path d="M0 5h9L4.500 0z" fill="#666" /></svg>
                              )}
                            </div>
                          ))}
                        </div>
                        <div className="flex-1" />
                      </div>
                    </div>
                  </div>
                </div>
              </div>
              {/* scrollbar */}
              <div className="w-[17px] bg-[#ededed] flex flex-col shrink-0">
                <div className="h-4 flex items-center justify-center"><ChevronUp size={12} color="#777" strokeWidth={2.800} /></div>
                <div className="h-[350px] bg-[#c4c4c4]" />
                <div className="flex-1" />
                <div className="h-4 flex items-center justify-center"><ChevronDown size={12} color="#777" strokeWidth={2.800} /></div>
              </div>
            </div>
          </div>
        </div>

        {/* status bar */}
        <div className="h-6 bg-[#0072c6] text-white flex items-center shrink-0 relative whitespace-nowrap pl-[7px]">
          <span className="w-[112px]">User: AliceK_001000</span>
          <span className="w-[130px]">Client ID: PSI001000AK2</span>
          <span className="w-[123px]">Memory Usage: 297MB</span>
          <span>Version: 18.1.11</span>
          <div className="absolute right-px bottom-[3px]">
            <svg width="9" height="9" viewBox="0 0 9 9"><path d="M6 0h3v2H6zM3 3h2v2H3zM6 3h3v2H6zM0 6h2v2H0zM3 6h2v2H3zM6 6h3v2H6z" fill="#b5d5ee" /></svg>
          </div>
        </div>
      </div>

      {/* annotation arrow */}
      <svg width="1375" height="664" viewBox="0 0 1375 664" className="absolute inset-0 pointer-events-none">
        <path d="M1064 267L1091 280 1085 285 1158 356 1155 359 1081 290 1074 294z" fill="#f00000" />
      </svg>
    </div>
  );
}
